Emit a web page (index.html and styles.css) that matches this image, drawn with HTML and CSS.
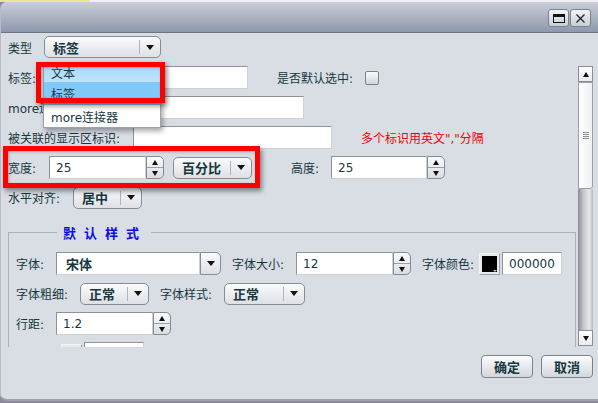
FILE: index.html
```html
<!DOCTYPE html>
<html lang="zh-CN">
<head>
    <meta charset="UTF-8">
    <title>标签属性</title>
    <link rel="stylesheet" href="styles.css">
</head>
<body>
    <div class="top-strip"><span class="strip-yellow"></span></div>
    <div class="window">
        <div class="titlebar">
            <button class="title-btn"><span class="icon-max"></span></button>
            <button class="title-btn">
                <svg width="11" height="11" viewBox="0 0 11 11"><path d="M1.5 1.5 L9.5 9.5 M9.5 1.5 L1.5 9.5" stroke="#222" stroke-width="1.3" fill="none"/></svg>
            </button>
        </div>

        <div class="dialog-body">
            <div class="row type-row">
                <span class="label w36">类型</span>
                <div class="combo w117">
                    <span class="combo-text">标签</span>
                    <span class="combo-arrow"><i class="tri-down"></i></span>
                </div>
            </div>

            <div class="panel">
                <div class="content">
                    <div class="row">
                        <span class="label w41">标签:</span>
                        <div class="input w199"></div>
                        <span class="label ml29 w88">是否默认选中:</span>
                        <span class="checkbox"></span>
                    </div>
                    <div class="row">
                        <span class="label w90">more连接器:</span>
                        <div class="input w206"></div>
                    </div>
                    <div class="row">
                        <span class="label w125">被关联的显示区标识:</span>
                        <div class="input w199"></div>
                        <span class="hint">多个标识用英文","分隔</span>
                    </div>
                    <div class="row">
                        <span class="label w41">宽度:</span>
                        <div class="spinner">
                            <div class="input w97">25</div>
                            <div class="spin-btns">
                                <span class="spin-up"><i class="tri-up"></i></span>
                                <span class="spin-down"><i class="tri-down"></i></span>
                            </div>
                        </div>
                        <div class="combo w79 ml9">
                            <span class="combo-text">百分比</span>
                            <span class="combo-arrow"><i class="tri-down"></i></span>
                        </div>
                        <span class="label ml39 w40">高度:</span>
                        <div class="spinner">
                            <div class="input w96">25</div>
                            <div class="spin-btns">
                                <span class="spin-up"><i class="tri-up"></i></span>
                                <span class="spin-down"><i class="tri-down"></i></span>
                            </div>
                        </div>
                    </div>
                    <div class="row">
                        <span class="label w65">水平对齐:</span>
                        <div class="combo w69">
                            <span class="combo-text">居中</span>
                            <span class="combo-arrow"><i class="tri-down"></i></span>
                        </div>
                    </div>

                    <fieldset class="style-box">
                        <legend>默认样式</legend>
                        <div class="row first">
                            <span class="label w40">字体:</span>
                            <div class="input w144 bold-val">宋体</div>
                            <span class="drop-btn"><i class="tri-down"></i></span>
                            <span class="label ml11 w64">字体大小:</span>
                            <div class="spinner">
                                <div class="input w97">12</div>
                                <div class="spin-btns">
                                    <span class="spin-up"><i class="tri-up"></i></span>
                                    <span class="spin-down"><i class="tri-down"></i></span>
                                </div>
                            </div>
                            <span class="label ml11 w57">字体颜色:</span>
                            <span class="swatch"><i class="swatch-arrow"></i></span>
                            <div class="input w60 ml2">000000</div>
                        </div>
                        <div class="row">
                            <span class="label w64">字体粗细:</span>
                            <div class="combo w69">
                                <span class="combo-text">正常</span>
                                <span class="combo-arrow"><i class="tri-down"></i></span>
                            </div>
                            <span class="label ml11 w64">字体样式:</span>
                            <div class="combo w81">
                                <span class="combo-text">正常</span>
                                <span class="combo-arrow"><i class="tri-down"></i></span>
                            </div>
                        </div>
                        <div class="row">
                            <span class="label w40">行距:</span>
                            <div class="spinner">
                                <div class="input w97">1.2</div>
                                <div class="spin-btns">
                                    <span class="spin-up"><i class="tri-up"></i></span>
                                    <span class="spin-down"><i class="tri-down"></i></span>
                                </div>
                            </div>
                        </div>
                        <div class="row">
                            <span class="w45"></span>
                            <span class="swatch small"></span>
                            <div class="input w60 ml2"></div>
                        </div>
                    </fieldset>
                </div>

                <div class="scrollbar">
                    <span class="sb-arrow"><i class="tri-up"></i></span>
                    <span class="sb-thumb"><i class="grip"></i></span>
                    <span class="sb-track"></span>
                    <span class="sb-arrow"><i class="tri-down"></i></span>
                </div>
            </div>

            <div class="footer">
                <button class="btn">确定</button>
                <button class="btn">取消</button>
            </div>
        </div>

        <!-- open dropdown of 类型 -->
        <ul class="popup">
            <li class="hover">文本</li>
            <li class="selected">标签</li>
            <li>more连接器</li>
        </ul>

        <!-- red highlight marks -->
        <div class="mark mark-type"></div>
        <div class="mark mark-width"></div>
    </div>
</body>
</html>
```

FILE: styles.css
```css
* {
    box-sizing: border-box;
}

body {
    margin: 0;
    width: 598px;
    height: 403px;
    overflow: hidden;
    background: #8d8a9c;
    font-family: "DejaVu Sans", "Noto Sans CJK SC", sans-serif;
    font-size: 12px;
    color: #16383e;
}

.top-strip {
    height: 2px;
    background: #f1f1f3;
}

.strip-yellow {
    display: block;
    width: 90px;
    height: 2px;
    background: #ebe698;
}

.window {
    position: relative;
    height: 399px;
    background: #d9dde4;
    border-left: 1px solid #b6bbc4;
    border-bottom: 2px solid #9ea2ab;
    border-radius: 7px 0 0 7px;
    display: flex;
    flex-direction: column;
    overflow: hidden;
}

/* title bar */
.titlebar {
    height: 31px;
    flex-shrink: 0;
    background: linear-gradient(#c9ced8, #8d98ad);
    border-bottom: 1px solid #6b7586;
    border-radius: 6px 0 0 0;
    display: flex;
    justify-content: flex-end;
    align-items: flex-start;
    gap: 1px;
    padding: 7px 7px 0 0;
}

.title-btn {
    width: 21px;
    height: 18px;
    padding: 0;
    border: 1px solid #7b818d;
    border-radius: 3px;
    background: linear-gradient(#f3f4f6, #c9ced6);
    display: flex;
    align-items: center;
    justify-content: center;
}

.icon-max {
    width: 12px;
    height: 9px;
    border: 1px solid #111;
    border-top-width: 3px;
}

/* generic */
.dialog-body {
    flex: 1;
    display: flex;
    flex-direction: column;
}

.row {
    display: flex;
    align-items: center;
    height: 23px;
    margin-bottom: 7px;
}

.label {
    white-space: nowrap;
    flex-shrink: 0;
}

.w36 { width: 36px; }
.w40 { width: 40px; }
.w41 { width: 41px; }
.w45 { width: 45px; flex-shrink: 0; }
.w57 { width: 57px; }
.w60 { width: 60px; }
.w64 { width: 64px; }
.w65 { width: 65px; }
.w69 { width: 69px; }
.w79 { width: 79px; }
.w81 { width: 81px; }
.w88 { width: 88px; }
.w90 { width: 90px; }
.w96 { width: 96px; }
.w97 { width: 97px; }
.w117 { width: 117px; }
.w125 { width: 125px; }
.w144 { width: 144px; }
.w199 { width: 199px; }
.w206 { width: 206px; }
.ml2 { margin-left: 2px; }
.ml9 { margin-left: 9px; }
.ml11 { margin-left: 11px; }
.ml29 { margin-left: 29px; }
.ml39 { margin-left: 39px; }

.input {
    height: 23px;
    flex-shrink: 0;
    background: #fff;
    border: 1px solid;
    border-color: #8e9298 #cdd0d5 #cdd0d5 #8e9298;
    padding: 0 6px;
    display: flex;
    align-items: center;
    font-size: 12px;
    color: #16383e;
}

.bold-val {
    font-weight: bold;
    font-size: 13px;
    padding-left: 9px;
}

.hint {
    margin-left: 29px;
    color: #f00000;
}

.checkbox {
    width: 14px;
    height: 14px;
    border: 1px solid #7c828c;
    border-radius: 2px;
    background: linear-gradient(#fbfbfc, #d2d6dc);
}

/* triangles */
.tri-down,
.tri-up {
    display: block;
    width: 0;
    height: 0;
    border-left: 4px solid transparent;
    border-right: 4px solid transparent;
}

.tri-down {
    border-top: 5px solid #111;
}

.tri-up {
    border-bottom: 5px solid #111;
}

/* combo button */
.combo {
    height: 22px;
    flex-shrink: 0;
    display: flex;
    border: 1px solid #868c96;
    border-radius: 5px;
    background: linear-gradient(#fbfbfc, #dde0e5);
}

.combo-text {
    flex: 1;
    display: flex;
    align-items: center;
    padding-left: 8px;
    font-weight: bold;
    font-size: 13px;
}

.combo-arrow {
    width: 21px;
    margin: 3px 0;
    border-left: 1px solid #aeb3ba;
    display: flex;
    align-items: center;
    justify-content: center;
}

.drop-btn {
    width: 21px;
    height: 23px;
    flex-shrink: 0;
    border: 1px solid #868c96;
    border-radius: 0 5px 5px 0;
    background: linear-gradient(#fbfbfc, #dde0e5);
    display: flex;
    align-items: center;
    justify-content: center;
}

/* spinner */
.spinner {
    display: flex;
    flex-shrink: 0;
}

.spin-btns {
    width: 18px;
    height: 23px;
    display: flex;
    flex-direction: column;
    border: 1px solid #858b95;
    border-radius: 0 5px 5px 0;
    background: linear-gradient(#fbfbfc, #d9dde2);
}

.spin-up,
.spin-down {
    flex: 1;
    display: flex;
    align-items: center;
    justify-content: center;
}

.spin-up {
    border-bottom: 1px solid #9aa0a8;
}

.spin-btns .tri-up,
.spin-btns .tri-down {
    border-left-width: 3.5px;
    border-right-width: 3.5px;
}

/* color swatch */
.swatch {
    position: relative;
    width: 21px;
    height: 22px;
    flex-shrink: 0;
    border: 1px solid;
    border-color: #f4f4f4 #9a9ea5 #9a9ea5 #f4f4f4;
    background: #000;
    box-shadow: inset 0 0 0 2px #e8eaee;
}

.swatch.small {
    margin-left: 0;
    height: 12px;
    align-self: flex-start;
    margin-top: 2px;
}

.swatch-arrow {
    position: absolute;
    right: 2px;
    bottom: 2px;
    width: 0;
    height: 0;
    border-left: 2px solid transparent;
    border-right: 2px solid transparent;
    border-top: 2px solid #bbb;
}

/* scroll panel */
.type-row {
    margin: 3px 0 6px;
    padding-left: 7px;
    height: 22px;
}

.panel {
    height: 283px;
    flex-shrink: 0;
    display: flex;
    overflow: hidden;
}

.content {
    flex: 1;
    padding: 2px 1px 0 7px;
    overflow: hidden;
}

.style-box {
    margin: 14px 0 0;
    padding: 0 7px;
    border: 1px solid #aab1bb;
    border-bottom: none;
    min-width: 0;
}

.style-box legend {
    margin-left: 41px;
    padding: 0 4px 0 6px;
    font-size: 13px;
    font-weight: bold;
    letter-spacing: 8px;
    color: #0a0ae6;
}

.style-box .first {
    margin-top: 10px;
}

.scrollbar {
    width: 15px;
    margin: 2px 5px 1px 1px;
    display: flex;
    flex-direction: column;
}

.sb-arrow {
    height: 16px;
    flex-shrink: 0;
    border: 1px solid #8b9098;
    background: linear-gradient(#ffffff, #e9ebee);
    display: flex;
    align-items: center;
    justify-content: center;
}

.sb-arrow .tri-up,
.sb-arrow .tri-down {
    border-left-width: 3px;
    border-right-width: 3px;
}

.sb-thumb {
    height: 107px;
    flex-shrink: 0;
    border: 1px solid #9aa0a8;
    border-radius: 0 0 3px 0;
    background: linear-gradient(to right, #ffffff, #eef0f2);
    display: flex;
    align-items: center;
    justify-content: center;
}

.grip {
    width: 6px;
    height: 7px;
    background: repeating-linear-gradient(#8a8f96 0 1px, transparent 1px 2px);
}

.sb-track {
    flex: 1;
    background: linear-gradient(to right, #878a8f, #c3c5c9 35%, #e6e7e9 75%, #b9bcc0);
}

/* footer */
.footer {
    display: flex;
    justify-content: flex-end;
    gap: 8px;
    padding: 8px 5px 0 0;
}

.btn {
    width: 52px;
    height: 23px;
    padding: 0;
    border: 1px solid #7c828c;
    border-radius: 4px;
    background: linear-gradient(#fcfcfd, #d3d7dd);
    font-family: "DejaVu Sans", "Noto Sans CJK SC", sans-serif;
    font-size: 13px;
    font-weight: bold;
    color: #16383e;
}

/* dropdown popup */
.popup {
    position: absolute;
    left: 42px;
    top: 60px;
    width: 118px;
    margin: 0;
    padding: 0;
    list-style: none;
    background: #fff;
    border: 1px solid #9da3ab;
    box-shadow: 2px 3px 5px rgba(0, 0, 0, 0.35);
}

.popup li {
    height: 21px;
    padding-left: 7px;
    display: flex;
    align-items: center;
}

.popup li.hover {
    height: 19px;
    background: linear-gradient(#a9d8fa, #bfe2fb);
}

.popup li.selected {
    height: 23px;
    background: #80c9f9;
}

.popup li:last-child {
    height: 22px;
}

/* red marks */
.mark {
    position: absolute;
    border: 5px solid #ff0000;
    box-shadow: 2px 3px 5px rgba(0, 0, 0, 0.45), inset 1px 1px 3px rgba(0, 0, 0, 0.25);
}

.mark-type {
    left: 35px;
    top: 60px;
    width: 129px;
    height: 41px;
}

.mark-width {
    left: 2px;
    top: 144px;
    width: 257px;
    height: 42px;
}
```
